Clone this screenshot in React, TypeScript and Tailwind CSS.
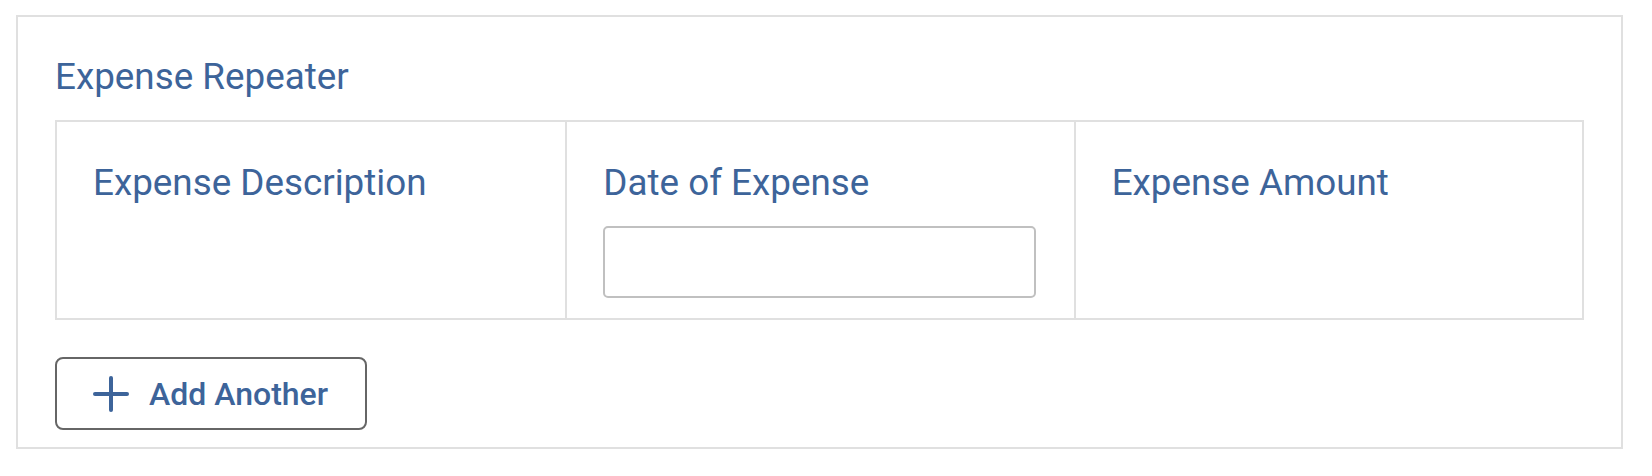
import React from "react";

const blue = "text-[#3d649a]";

function Cell({ label, withInput, first }: { label: string; withInput?: boolean; first?: boolean }) {
  return (
    <div className={`${first ? "" : "border-l-2 border-[#e0e0e0]"} pl-[36px] pr-[38px] pt-[39px] pb-[20px]`}>
      <div className={`text-[36.8px] leading-[44px] ${blue}`}>{label}</div>
      {withInput && (
        <div className="mt-[21px] h-[72px] rounded-[5px] border-2 border-[#c0c0c0] bg-white" />
      )}
    </div>
  );
}

export default function App() {
  return (
    <div className="bg-white min-h-[476px] pt-[15px] pl-[16px]" style={{ fontFamily: "Roboto, 'Liberation Sans', sans-serif" }}>
      <div className="w-[1607px] border-2 border-[#e0e0e0] px-[37px] pt-[38px] pb-[17px]">
        <div className={`text-[36.8px] leading-[44px] ${blue}`}>Expense Repeater</div>
        <div className="mt-[21px] grid grid-cols-3 border-2 border-[#e0e0e0]">
          <Cell label="Expense Description" first />
          <Cell label="Date of Expense" withInput />
          <Cell label="Expense Amount" />
        </div>
        <button
          type="button"
          className={`mt-[37px] flex h-[73px] w-[312px] items-center gap-[20px] rounded-[8px] border-2 border-[#666666] bg-white pl-[36px] ${blue}`}
        >
          <svg width="36" height="36" viewBox="0 0 36 36" fill="none" stroke="currentColor" strokeWidth="4" strokeLinecap="round">
            <line x1="2" y1="18" x2="34" y2="18" />
            <line x1="18" y1="2" x2="18" y2="34" />
          </svg>
          <span className="text-[32px] font-medium leading-none">Add Another</span>
        </button>
      </div>
    </div>
  );
}
